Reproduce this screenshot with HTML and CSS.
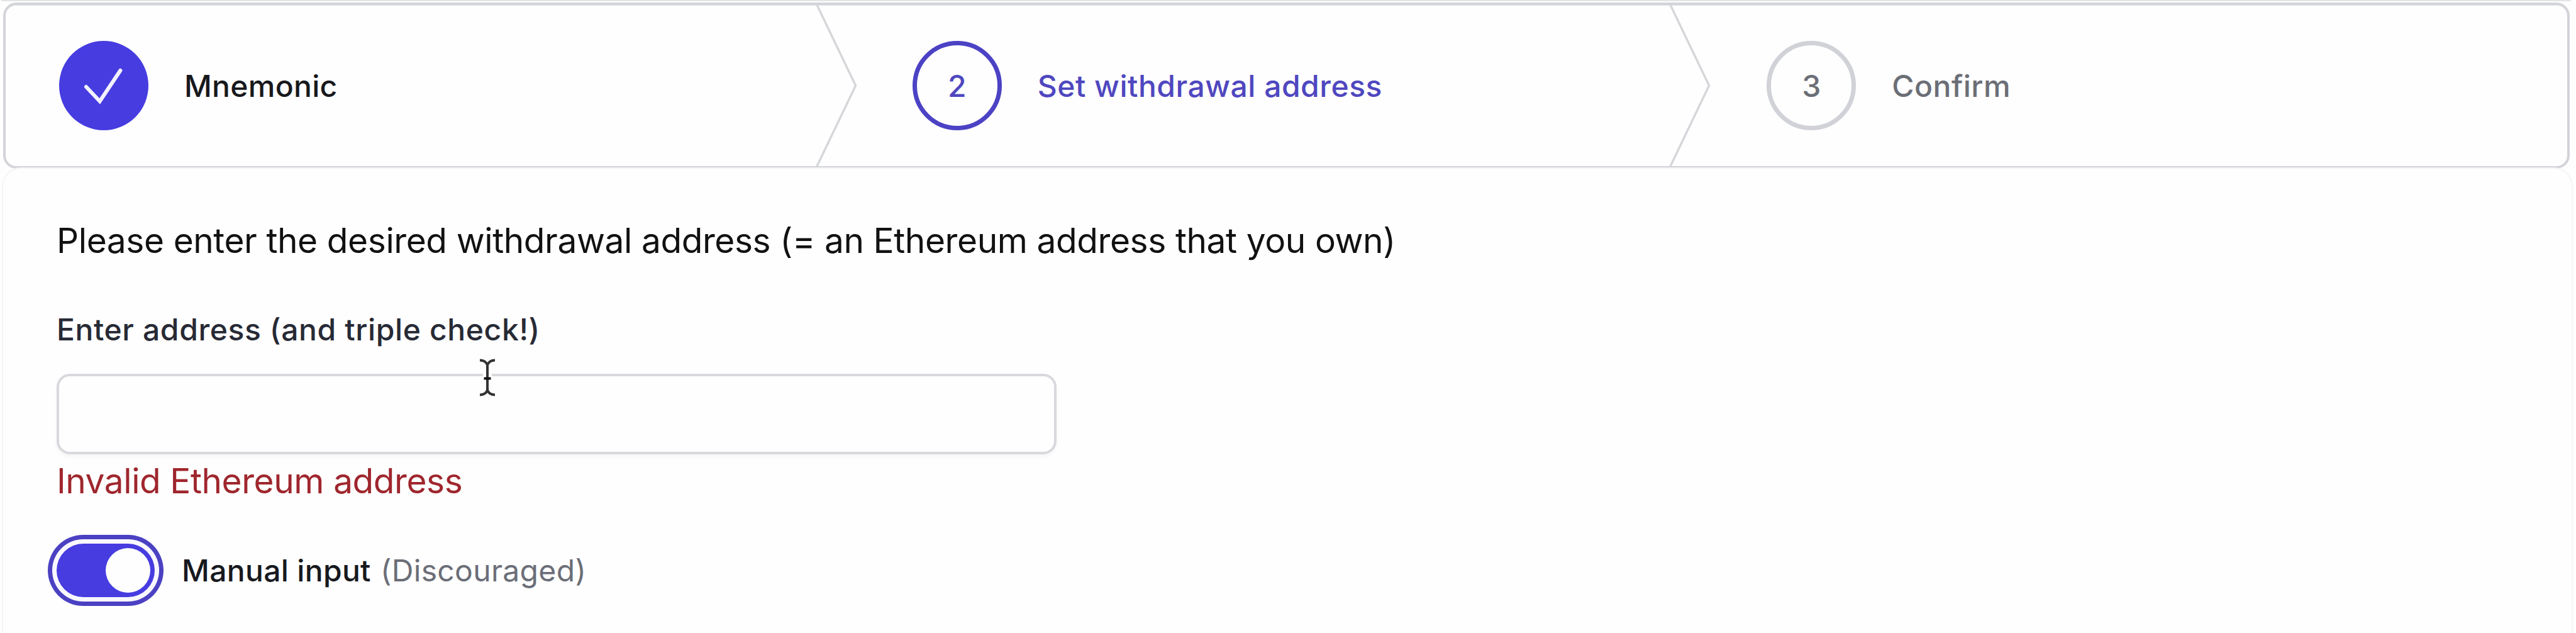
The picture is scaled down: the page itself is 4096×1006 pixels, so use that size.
FILE: index.html
```html
<!DOCTYPE html>
<html lang="en">
<head>
<meta charset="utf-8">
<title>Set withdrawal address</title>
<link rel="stylesheet" href="styles.css">
</head>
<body>
<main class="page">
  <nav class="steps" aria-label="Progress">
    <div class="step step-done">
      <span class="step-badge">
        <svg class="check" viewBox="0 0 142 142" fill="none"><path d="M43 73 64.7 96 97.4 47"/></svg>
      </span>
      <span class="step-label label-mnemonic">Mnemonic</span>
      <svg class="chevron" viewBox="0 0 22 80" preserveAspectRatio="none" fill="none"><path d="M0 -2L20 40L0 82" vector-effect="non-scaling-stroke"/></svg>
    </div>
    <div class="step step-current">
      <span class="step-badge">2</span>
      <span class="step-label label-address">Set withdrawal address</span>
      <svg class="chevron" viewBox="0 0 22 80" preserveAspectRatio="none" fill="none"><path d="M0 -2L20 40L0 82" vector-effect="non-scaling-stroke"/></svg>
    </div>
    <div class="step step-upcoming">
      <span class="step-badge">3</span>
      <span class="step-label label-confirm">Confirm</span>
    </div>
  </nav>
  <section class="panel">
    <p class="intro">Please enter the desired withdrawal address (= an Ethereum address that you own)</p>
    <label class="field-label" for="address">Enter address (and triple check!)</label>
    <div class="field">
      <input class="field-input" id="address" type="text">
      <svg class="cursor" viewBox="0 0 32 64" fill="none">
        <path class="cursor-halo" d="M16 9V55"/>
        <path class="cursor-line" d="M16 10V54M4 4.500C10 4.500 14 7 16 12C18 7 22 4.500 28 4.500M4 59.500C10 59.500 14 57 16 52C18 57 22 59.500 28 59.500"/>
        <path class="cursor-bar" d="M10.500 33.500H21.500"/>
      </svg>
    </div>
    <p class="error">Invalid Ethereum address</p>
    <div class="toggle-row">
      <button class="toggle" type="button" role="switch" aria-checked="true" aria-label="Manual input"><span class="knob"></span></button>
      <span class="toggle-label">Manual input <span class="toggle-note">(Discouraged)</span></span>
    </div>
  </section>
</main>
</body>
</html>
```
FILE: styles.css
```css
* { box-sizing: border-box; }

body {
  margin: 0;
  background: #fefefe;
  color: #111;
  font-family: Inter, "Liberation Sans", sans-serif;
}

p { margin: 0; }

.page {
  width: 4096px;
  height: 1006px;
  padding: 2px 10px 0 5px;
  overflow: hidden;
  background: linear-gradient(#e3e4e8, #e3e4e8) 2px 0 / 4086px 2px no-repeat;
}

.steps {
  display: flex;
  height: 264px;
  margin-top: 2px;
  border: 4px solid #d3d4d9;
  border-radius: 21px;
  box-shadow: inset 0 2px 1px -1px #e3e5e9;
}

.step {
  position: relative;
  flex: 1;
  display: flex;
  align-items: center;
  gap: 57px;
  padding-left: 85px;
  font-size: 48px;
  font-weight: 500;
  line-height: 71px;
}

.step-badge {
  display: flex;
  align-items: center;
  justify-content: center;
  width: 142px;
  height: 142px;
  border: 7px solid #d0d2d8;
  border-radius: 50%;
}

.step-done .step-badge {
  border: 0;
  background: #463ce0;
}

.step-done { color: #17181c; }
.step-current { color: #4f47bf; }
.step-current .step-badge { margin-left: -1px; border-color: #4b42c4; }
.step-upcoming { color: #6b6e76; }

.label-mnemonic { letter-spacing: 0.3px; }
.label-address { letter-spacing: 0.52px; }
.label-confirm { letter-spacing: 0.5px; }

.check {
  width: 142px;
  height: 142px;
  stroke: #f3f1ff;
  stroke-width: 6;
  stroke-linecap: round;
}

.chevron {
  position: absolute;
  top: 0;
  right: 0;
  width: 71px;
  height: 100%;
  stroke: #d6d7da;
  stroke-width: 3.5;
}

.panel {
  height: 780px;
  margin: 0 -3px 0 0;
  padding: 72px 85px 0;
  border-radius: 28px;
  box-shadow: 0 0 0 2px #f4f4f6;
}

.intro {
  font-size: 55px;
  line-height: 85px;
  letter-spacing: -0.41px;
}

.field-label {
  display: block;
  margin-top: 63px;
  color: #272a35;
  font-size: 48px;
  font-weight: 500;
  line-height: 71px;
  letter-spacing: 0.62px;
}

.field {
  position: relative;
  width: 1590px;
  height: 128px;
  margin-top: 35px;
}

.field-input {
  display: block;
  width: 100%;
  height: 100%;
  padding: 0 40px;
  border: 4px solid #d8d9dd;
  border-radius: 21px;
  outline: 0;
  background: #fefefe;
  box-shadow: 0 4px 7px rgba(0, 0, 20, 0.04);
  font: inherit;
  font-size: 48px;
}

.cursor {
  position: absolute;
  top: -26px;
  left: 669px;
  width: 32px;
  height: 64px;
}

.cursor-halo { stroke: #fefefe; stroke-width: 14; }
.cursor-line { stroke: #333; stroke-width: 4; }
.cursor-bar { stroke: #111; stroke-width: 4; }

.error {
  color: #9f262d;
  font-size: 55px;
  line-height: 85px;
  letter-spacing: -0.43px;
}

.toggle-row {
  display: flex;
  align-items: center;
  gap: 43px;
  margin-top: 57px;
}

.toggle {
  display: flex;
  align-items: center;
  justify-content: flex-end;
  width: 156px;
  height: 85px;
  padding: 0 7px;
  border: 0;
  border-radius: 43px;
  background: #463ce0;
  box-shadow: 0 0 0 7px #f8f7ff, 0 0 0 14px #4b41c2;
}

.knob {
  width: 71px;
  height: 71px;
  border-radius: 50%;
  background: #fefefe;
}

.toggle-label {
  color: #17191e;
  font-size: 48px;
  font-weight: 500;
  line-height: 71px;
  letter-spacing: 0.33px;
}

.toggle-note {
  margin-left: 2px;
  color: #6b6e78;
  font-weight: 400;
}
```
